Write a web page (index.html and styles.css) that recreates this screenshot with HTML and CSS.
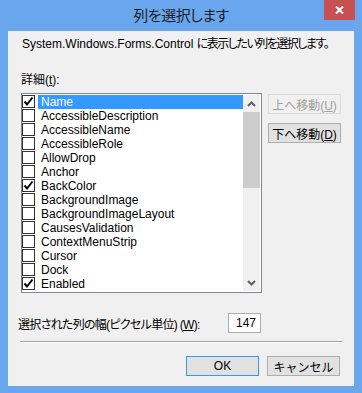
FILE: index.html
```html
<!DOCTYPE html>
<html>
<head>
  <meta charset="utf-8">
  <title>列を選択します</title>
  <link rel="stylesheet" href="styles.css">
</head>
<body>
  <div class="window">
    <div class="titlebar">
      <span></span>
      <h1 class="title">列を選択します</h1>
      <button class="close" aria-label="閉じる">
        <svg width="9" height="8" viewBox="0 0 9 8"><path d="M1 0.5 L8 7.5 M8 0.5 L1 7.5" stroke="#fff" stroke-width="2"/></svg>
      </button>
    </div>

    <div class="client">
      <p class="intro">System.Windows.Forms.Control <span class="ja">に表示したい列を選択します。</span></p>
      <label class="caption">詳細(<u>t</u>):</label>

      <div class="picker">
        <div class="listbox">
          <ul class="items">
            <li class="item selected"><span class="check on"></span><span class="name">Name</span></li>
            <li class="item"><span class="check"></span><span class="name">AccessibleDescription</span></li>
            <li class="item"><span class="check"></span><span class="name">AccessibleName</span></li>
            <li class="item"><span class="check"></span><span class="name">AccessibleRole</span></li>
            <li class="item"><span class="check"></span><span class="name">AllowDrop</span></li>
            <li class="item"><span class="check"></span><span class="name">Anchor</span></li>
            <li class="item"><span class="check on"></span><span class="name">BackColor</span></li>
            <li class="item"><span class="check"></span><span class="name">BackgroundImage</span></li>
            <li class="item"><span class="check"></span><span class="name">BackgroundImageLayout</span></li>
            <li class="item"><span class="check"></span><span class="name">CausesValidation</span></li>
            <li class="item"><span class="check"></span><span class="name">ContextMenuStrip</span></li>
            <li class="item"><span class="check"></span><span class="name">Cursor</span></li>
            <li class="item"><span class="check"></span><span class="name">Dock</span></li>
            <li class="item"><span class="check on"></span><span class="name">Enabled</span></li>
          </ul>
          <div class="scrollbar">
            <div class="arrow">
              <svg width="9" height="6" viewBox="0 0 9 6"><path d="M1 5 L4.5 1.5 L8 5" fill="none" stroke="#606060" stroke-width="2"/></svg>
            </div>
            <div class="track"><div class="thumb"></div></div>
            <div class="arrow">
              <svg width="9" height="6" viewBox="0 0 9 6"><path d="M1 1 L4.5 4.5 L8 1" fill="none" stroke="#606060" stroke-width="2"/></svg>
            </div>
          </div>
        </div>

        <div class="move-buttons">
          <button class="btn" disabled>上へ移動(<u>U</u>)</button>
          <button class="btn">下へ移動(<u>D</u>)</button>
        </div>
      </div>

      <div class="width-row">
        <label class="width-label">選択された列の幅(ピクセル単位) (<u>W</u>):</label>
        <input class="width-input" type="text" value="147">
      </div>

      <hr class="separator">

      <div class="actions">
        <button class="btn default">OK</button>
        <button class="btn">キャンセル</button>
      </div>
    </div>
  </div>
</body>
</html>
```

FILE: styles.css
```css
body {
  margin: 0;
  background-color: #6aa6ee;
  font-family: "Liberation Sans", "Noto Sans CJK JP", sans-serif;
  font-size: 12px;
  font-feature-settings: "palt";
  color: #000;
}
.window {
  width: 362px;
  height: 393px;
  background-color: #6aa6ee;
  display: flex;
  flex-direction: column;
}
.titlebar {
  height: 31px;
  display: grid;
  grid-template-columns: 1fr auto 1fr;
}
.title {
  margin: 0;
  font-size: 15px;
  font-weight: normal;
  line-height: 31px;
  letter-spacing: -0.5px;
  color: #1e1e1e;
}
.close {
  justify-self: end;
  width: 31px;
  height: 20px;
  margin-right: 7px;
  border: none;
  padding: 0;
  background-color: #c75050;
  display: flex;
  align-items: center;
  justify-content: center;
}
.client {
  height: 355px;
  margin: 0 8px;
  padding: 0 13px;
  background-color: #f0f0f0;
  box-sizing: border-box;
  display: flex;
  flex-direction: column;
}
.intro {
  margin: 6px 0 0 1px;
  line-height: 14px;
  white-space: nowrap;
}
.intro .ja {
  letter-spacing: -1.5px;
}
.caption {
  margin-top: 22px;
  line-height: 14px;
}
.picker {
  margin-top: 6px;
  display: flex;
  gap: 6px;
}
.listbox {
  width: 241px;
  height: 200px;
  box-sizing: border-box;
  border: 1px solid #828790;
  background-color: #fff;
  padding: 1px 1px 1px 0;
  display: flex;
}
.items {
  list-style: none;
  margin: 0;
  padding: 0;
  width: 221px;
}
.item {
  height: 14px;
  display: flex;
  align-items: flex-start;
}
.check {
  width: 13px;
  height: 13px;
  box-sizing: border-box;
  border: 1px solid #333;
  flex: none;
}
.check.on {
  background: url("data:image/svg+xml,%3Csvg xmlns='http://www.w3.org/2000/svg' width='11' height='11'%3E%3Cpath d='M1.5 5.5 L4 8.5 L9.5 1.5' fill='none' stroke='%23000' stroke-width='2'/%3E%3C/svg%3E") no-repeat center;
}
.name {
  flex: 1;
  margin-left: 3px;
  padding-left: 3px;
  height: 14px;
  line-height: 14px;
  white-space: nowrap;
}
.selected .name {
  background-color: #3399ff;
  color: #fff;
}
.scrollbar {
  width: 17px;
  background-color: #f0f0f0;
  display: flex;
  flex-direction: column;
}
.arrow {
  height: 17px;
  display: flex;
  align-items: center;
  justify-content: center;
}
.track {
  flex: 1;
}
.thumb {
  height: 76px;
  background-color: #cdcdcd;
}
.move-buttons {
  display: flex;
  flex-direction: column;
  gap: 9px;
  padding-top: 1px;
}
.btn {
  width: 73px;
  height: 20px;
  padding: 0;
  border: 1px solid #adadad;
  background-color: #e1e1e1;
  font-family: inherit;
  font-size: 12px;
  color: #000;
}
.btn:disabled {
  border-color: #d9d9d9;
  background-color: #f0f0f0;
  color: #a0a0a0;
}
.btn.default {
  border-color: #3399ff;
}
.width-row {
  margin: 20px 0 0 -3px;
  display: flex;
  align-items: center;
  justify-content: space-between;
  width: 243px;
}
.width-label {
  letter-spacing: -0.7px;
}
.width-input {
  width: 33px;
  height: 20px;
  box-sizing: border-box;
  border: 1px solid #abadb3;
  padding: 0 4px 0 0;
  text-align: right;
  font-family: inherit;
  font-size: 12px;
}
.separator {
  margin: 8px -1px 0;
  border: none;
  border-top: 1px solid #a0a0a0;
  border-bottom: 1px solid #fff;
}
.actions {
  margin-top: 13px;
  display: flex;
  justify-content: flex-end;
  gap: 8px;
  padding-right: 1px;
}
```
